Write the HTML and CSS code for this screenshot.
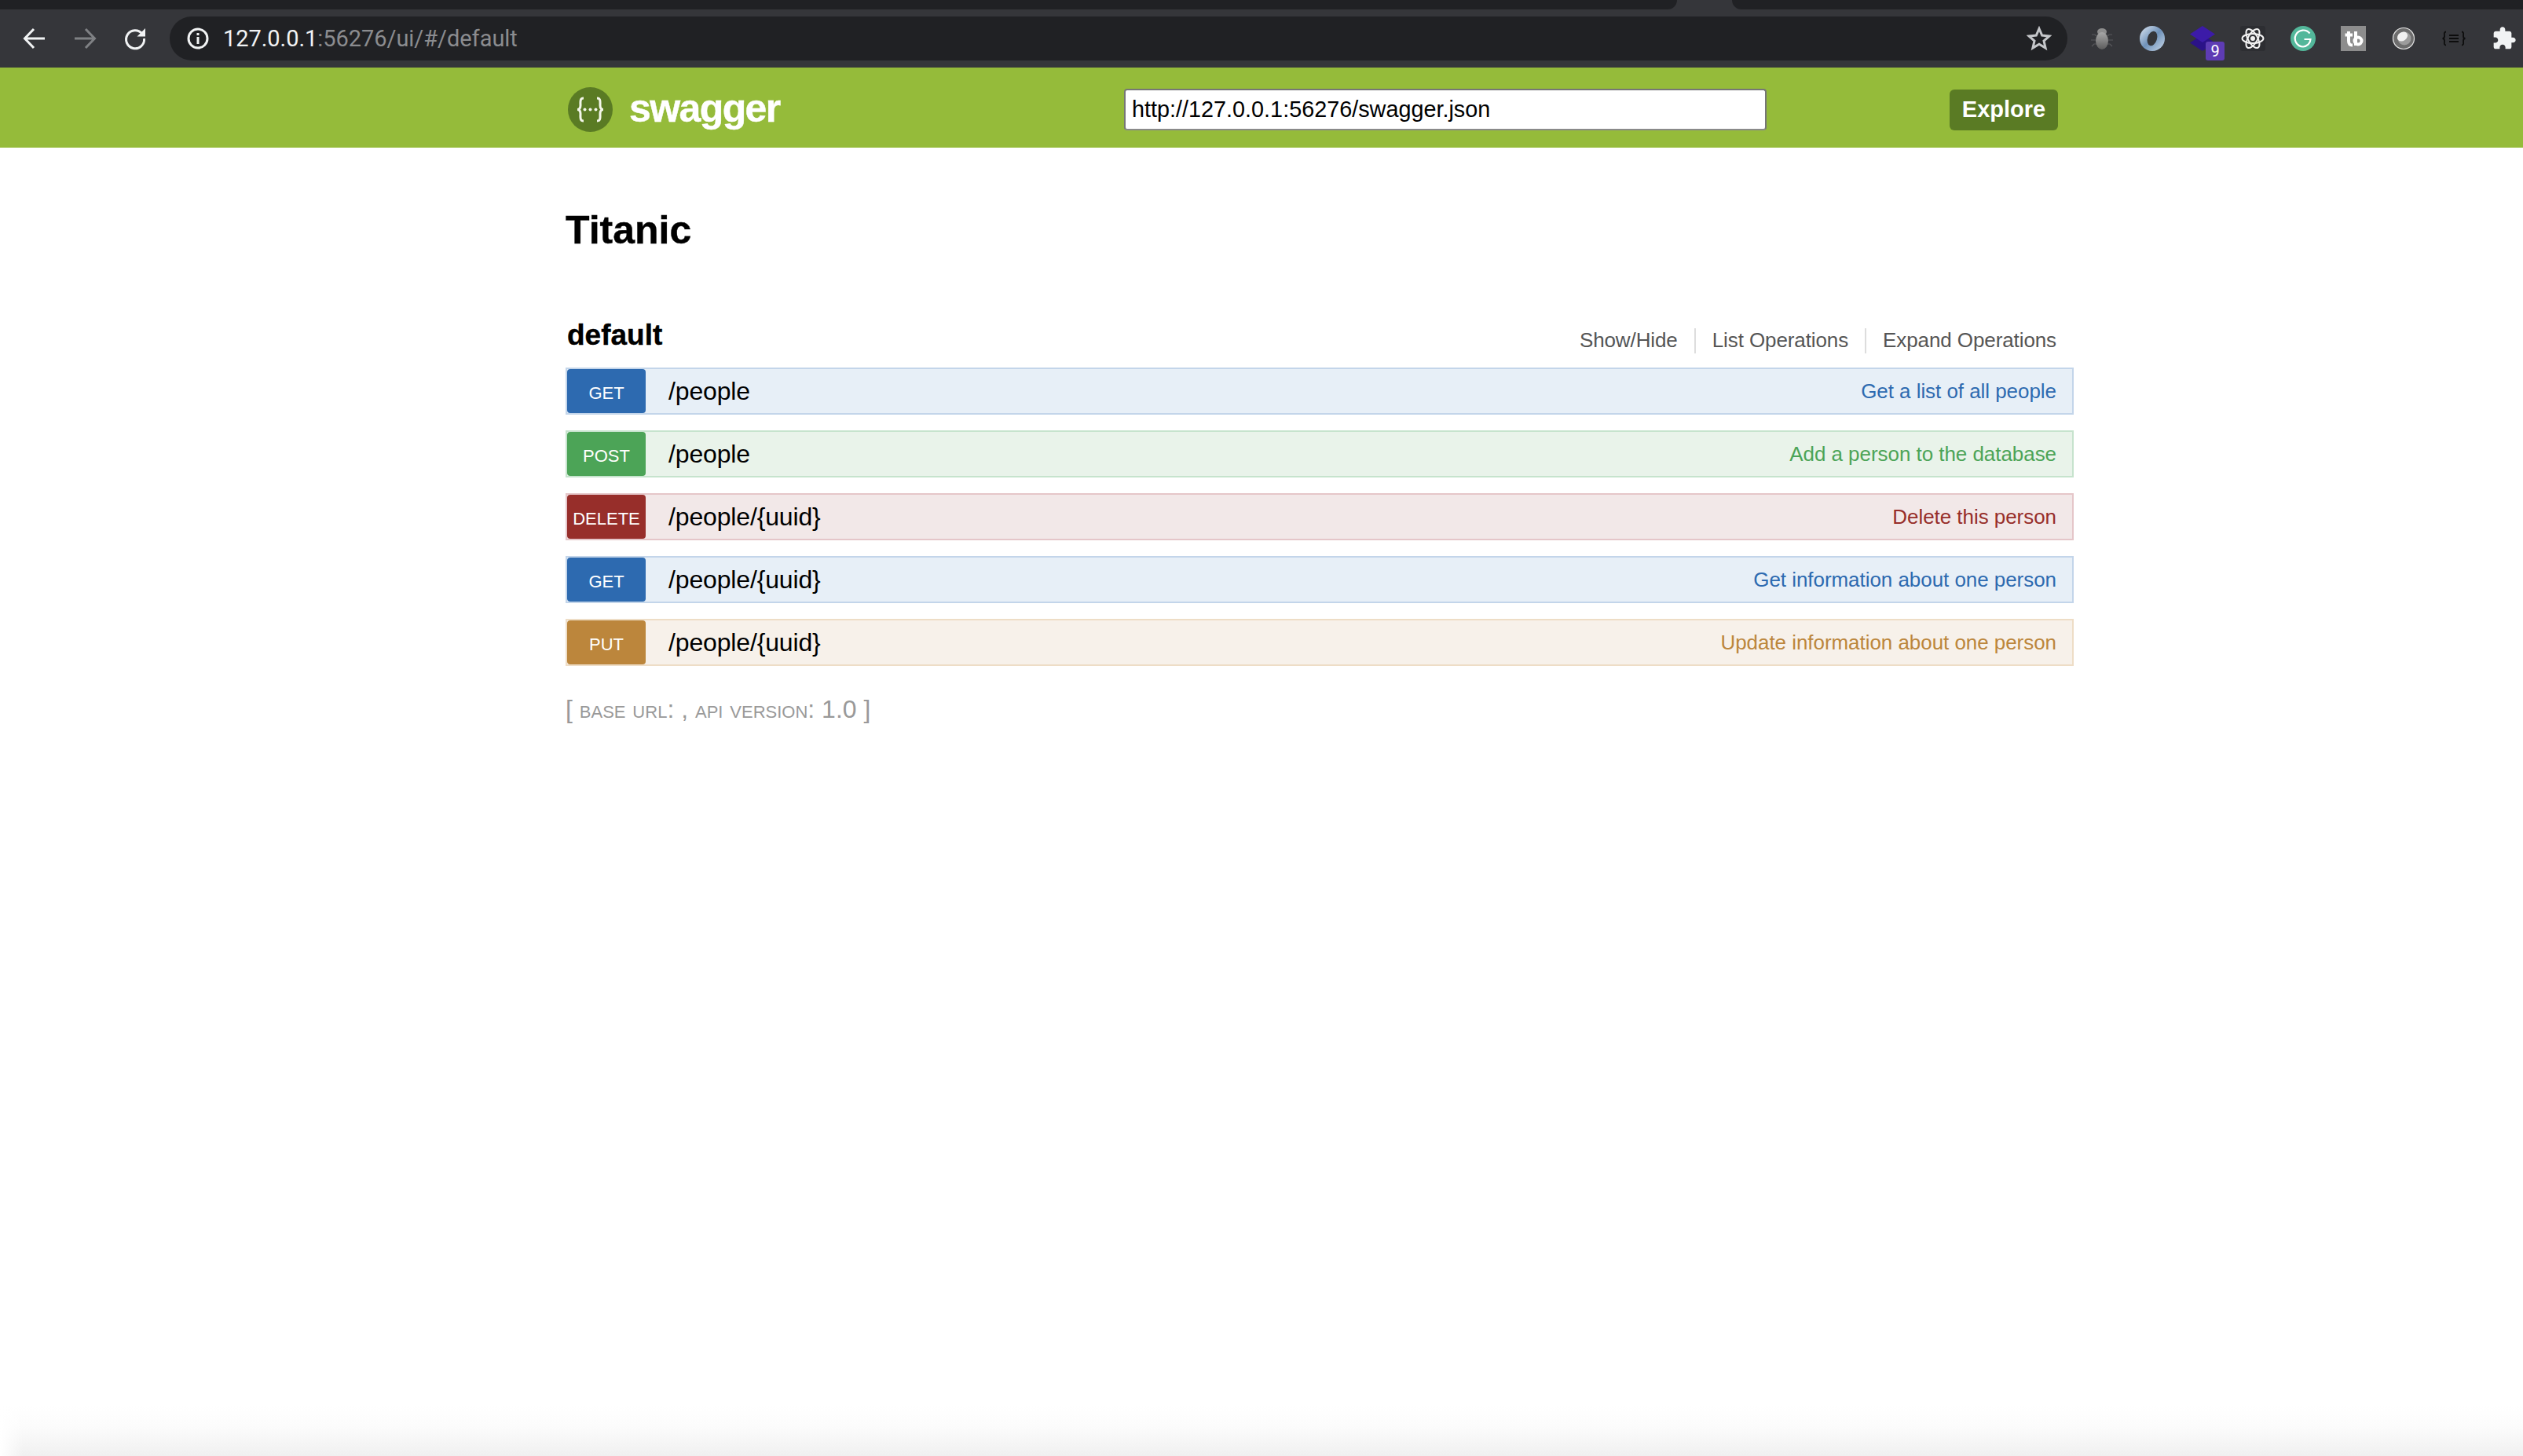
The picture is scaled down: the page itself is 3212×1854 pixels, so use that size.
FILE: index.html
```html
<!DOCTYPE html>
<html lang="en">
<head>
  <meta charset="UTF-8">
  <title>Swagger UI</title>
  <link rel="stylesheet" href="styles.css">
</head>
<body>

<!-- BROWSER CHROME -->
<div class="tabstrip">
  <div class="tabstrip-left"></div>
  <div class="tabstrip-gap"></div>
  <div class="tabstrip-right"></div>
</div>
<div class="toolbar">
  <svg class="tool" viewBox="0 0 32 32"><path class="line-light" d="M29 16H4M15 4 3.500 16 15 28"/></svg>
  <svg class="tool" viewBox="0 0 32 32"><path class="line-dim" d="M3 16h25M17 4l11.500 12L17 28"/></svg>
  <svg class="tool" viewBox="0 0 32 32"><path class="line-light" d="M25 10A11.500 11.500 0 1 0 27.500 16"/><path class="fill-light" d="M29 3v10.500H18.500z"/></svg>
  <div class="omnibox">
    <svg class="omni-info" viewBox="0 0 28 28"><circle class="line-info" cx="14" cy="14" r="12"/><path class="fill-light" d="M12.500 12h3v9h-3zM12.500 7h3v3h-3z"/></svg>
    <div class="omni-url">127.0.0.1<span class="omni-dim">:56276/ui/#/default</span></div>
    <svg class="omni-star" viewBox="0 0 32 32"><path class="line-star" d="M16 3.500l3.700 8.600 9.300.800-7 6.100 2.100 9.100-8.100-4.800-8.100 4.800 2.100-9.100-7-6.100 9.300-.800z"/></svg>
  </div>
  <div class="extensions">
    <svg class="ext" viewBox="0 0 32 32">
      <defs><linearGradient id="bugBody" x1="0" y1="0" x2="0" y2="1"><stop offset="0" stop-color="#a8a8a8"/><stop offset="1" stop-color="#5c5c5c"/></linearGradient></defs>
      <path class="bug-legs" d="M3 11h4l2 2M29 11h-4l-2 2M2 18h6M30 18h-6M3 26l3-3h3M29 26l-3-3h-3"/>
      <ellipse cx="16" cy="7.500" rx="6" ry="4.500" fill="#8e8e8e"/>
      <ellipse cx="16" cy="19" rx="8" ry="11" fill="url(#bugBody)"/>
    </svg>
    <svg class="ext" viewBox="0 0 32 32">
      <defs><linearGradient id="ringFill" x1="0" y1="0" x2="1" y2="1"><stop offset="0" stop-color="#dfe8f2"/><stop offset=".5" stop-color="#6f92ba"/><stop offset="1" stop-color="#c9d8e8"/></linearGradient></defs>
      <circle cx="16" cy="16" r="16" fill="url(#ringFill)"/>
      <ellipse cx="16" cy="16" rx="6" ry="9.500" transform="rotate(18 16 16)" fill="#35363a"/>
    </svg>
    <div class="ext-badged">
      <svg class="ext" viewBox="0 0 32 32">
        <path fill="#2b1288" d="M16 11 32 21.500 16 32 0 21.500z"/>
        <path fill="#3c1ba8" d="M16 0 32 10.500 16 21 0 10.500z"/>
      </svg>
      <span class="ext-count">9</span>
    </div>
    <svg class="ext ext-tile" viewBox="0 0 32 32">
      <g class="line-atom"><ellipse cx="16" cy="16" rx="13.500" ry="6"/><ellipse cx="16" cy="16" rx="13.500" ry="6" transform="rotate(60 16 16)"/><ellipse cx="16" cy="16" rx="13.500" ry="6" transform="rotate(120 16 16)"/></g>
      <circle cx="16" cy="16" r="3" fill="#f2f2f2"/>
    </svg>
    <svg class="ext" viewBox="0 0 32 32"><circle cx="16" cy="16" r="16" fill="#53b79a"/><path class="line-g" d="M24.500 9.500A10.500 10.500 0 1 0 16 26.500 10 10 0 0 0 25.500 17H17.500"/></svg>
    <svg class="ext" viewBox="0 0 32 32"><rect width="32" height="32" fill="#8d8d8d"/><path class="line-tb" d="M5.500 11.500H15M10 7v12c0 4 1.500 5.500 5 5.500M19 7v18"/><circle class="line-tb" cx="22" cy="19" r="4.500"/></svg>
    <svg class="ext" viewBox="0 0 32 32">
      <circle cx="16" cy="16" r="13.500" fill="#6d6d6d" stroke="#e4e4e4" stroke-width="1.200"/>
      <circle cx="17" cy="16" r="8.500" fill="#9c9c9c"/>
      <ellipse cx="14.500" cy="13.500" rx="7" ry="5.500" transform="rotate(-35 14.500 13.500)" fill="#f0f0f0"/>
    </svg>
    <svg class="ext" viewBox="0 0 32 32"><path class="line-json" d="M6 7.500c-3 0-2 3-2 5.500s-1 3-2.500 3c1.500 0 2.500.5 2.500 3s-1 5.500 2 5.500M26 7.500c3 0 2 3 2 5.500s1 3 2.500 3c-1.500 0-2.500.5-2.500 3s1 5.500-2 5.500M10 12h12M10 16h12M10 20h12"/></svg>
    <svg class="ext" viewBox="0 0 24 24"><path fill="#f1f3f4" d="M20.500 11H19V7c0-1.100-.9-2-2-2h-4V3.500C13 2.120 11.880 1 10.500 1S8 2.120 8 3.500V5H4c-1.100 0-1.990.9-1.990 2v3.800H3.500c1.490 0 2.700 1.210 2.700 2.700s-1.210 2.700-2.700 2.700H2V20c0 1.100.9 2 2 2h3.800v-1.500c0-1.490 1.210-2.700 2.700-2.700 1.490 0 2.700 1.210 2.700 2.700V22H17c1.100 0 2-.9 2-2v-4h1.500c1.380 0 2.500-1.120 2.500-2.500S21.880 11 20.500 11z"/></svg>
  </div>
</div>

<!-- SWAGGER HEADER -->
<header class="swagger-header">
  <div class="logo">
    <svg class="logo-mark" viewBox="0 0 57 57">
      <circle cx="28.500" cy="28.500" r="28.500" fill="#5a7b24"/>
      <path class="line-brace" d="M20 14c-5 0-4 5-4 9s-2 5.500-4 5.500c2 0 4 1.500 4 5.500s-1 9 4 9M37 14c5 0 4 5 4 9s2 5.500 4 5.500c-2 0-4 1.500-4 5.500s1 9-4 9"/>
      <circle cx="21.500" cy="28.500" r="2" fill="#f3f6ea"/><circle cx="28.500" cy="28.500" r="2" fill="#f3f6ea"/><circle cx="35.500" cy="28.500" r="2" fill="#f3f6ea"/>
    </svg>
    <span class="logo-text">swagger</span>
  </div>
  <input class="spec-url" type="text" value="http://127.0.0.1:56276/swagger.json">
  <button class="explore">Explore</button>
</header>

<!-- API DOCS -->
<main class="docs">
  <h1 class="api-title">Titanic</h1>

  <div class="resource-head">
    <h2>default</h2>
    <ul class="resource-links">
      <li>Show/Hide</li>
      <li>List Operations</li>
      <li>Expand Operations</li>
    </ul>
  </div>

  <div class="operations">
    <div class="op op-get">
      <span class="op-method">GET</span>
      <span class="op-path">/people</span>
      <span class="op-summary">Get a list of all people</span>
    </div>
    <div class="op op-post">
      <span class="op-method">POST</span>
      <span class="op-path">/people</span>
      <span class="op-summary">Add a person to the database</span>
    </div>
    <div class="op op-delete">
      <span class="op-method">DELETE</span>
      <span class="op-path">/people/{uuid}</span>
      <span class="op-summary">Delete this person</span>
    </div>
    <div class="op op-get">
      <span class="op-method">GET</span>
      <span class="op-path">/people/{uuid}</span>
      <span class="op-summary">Get information about one person</span>
    </div>
    <div class="op op-put">
      <span class="op-method">PUT</span>
      <span class="op-path">/people/{uuid}</span>
      <span class="op-summary">Update information about one person</span>
    </div>
  </div>

  <p class="api-footer">[ <span class="caps">base url</span>: , <span class="caps">api version</span>: 1.0 ]</p>
</main>

<div class="window-shade"></div>

</body>
</html>
```

FILE: styles.css
```css
html, body { height: 100%; }

body {
  margin: 0;
  display: flex;
  flex-direction: column;
  background: #fff;
  color: #000;
  font-family: "Liberation Sans", Arial, sans-serif;
  overflow: hidden;
}

/* browser chrome */
.tabstrip {
  display: flex;
  height: 12px;
  background: #35363a;
}

.tabstrip-left {
  width: 2135px;
  background: #202124;
  border-bottom-right-radius: 12px;
}

.tabstrip-gap { width: 70px; }

.tabstrip-right {
  flex: 1;
  background: #202124;
  border-bottom-left-radius: 12px;
}

.toolbar {
  display: flex;
  align-items: center;
  gap: 32px;
  height: 74px;
  padding: 0 8px 0 28px;
  background: #35363a;
}

.tool, .ext {
  width: 32px;
  height: 32px;
  flex: none;
  display: block;
}

.line-light, .line-dim {
  fill: none;
  stroke: #f1f3f4;
  stroke-width: 3;
}

.line-dim { stroke: #7f8184; }

.fill-light { fill: #f1f3f4; }

.omnibox {
  flex: 1;
  display: flex;
  align-items: center;
  height: 56px;
  margin: 0 -4px;
  padding: 0 20px 0 22px;
  background: #202124;
  border-radius: 28px;
}

.omni-info {
  width: 28px;
  height: 28px;
  margin-right: 18px;
}

.line-info {
  fill: none;
  stroke: #f1f3f4;
  stroke-width: 3;
}

.omni-url {
  flex: 1;
  font-family: Roboto, sans-serif;
  font-size: 29px;
  letter-spacing: -0.050px;
  color: #f1f3f4;
}

.omni-dim { color: #8b8c8f; }

.omni-star {
  width: 32px;
  height: 32px;
}

.line-star {
  fill: none;
  stroke: #c4c6c9;
  stroke-width: 3;
}

.extensions {
  display: flex;
  gap: 32px;
}

.ext-badged { position: relative; }

.ext-count {
  position: absolute;
  left: 20px;
  top: 20px;
  width: 24px;
  height: 24px;
  background: #5e3cb4;
  border-radius: 3px;
  color: #fff;
  font-family: Roboto, sans-serif;
  font-size: 20px;
  line-height: 24px;
  text-align: center;
}

.ext-tile {
  background: #2d2e32;
  border-radius: 3px;
}

.bug-legs {
  fill: none;
  stroke: #58595c;
  stroke-width: 1.2;
}

.line-atom {
  fill: none;
  stroke: #f2f2f2;
  stroke-width: 2;
}

.line-g {
  fill: none;
  stroke: #fff;
  stroke-width: 2.2;
}

.line-tb {
  fill: none;
  stroke: #fff;
  stroke-width: 4;
}

.line-json {
  fill: none;
  stroke: #0d0d0d;
  stroke-width: 1.8;
}

/* swagger header */
.swagger-header {
  display: flex;
  align-items: center;
  box-sizing: border-box;
  height: 102px;
  padding: 5px 592px 0 723px;
  background: #95bb3a;
}

.logo {
  display: flex;
  align-items: center;
  gap: 21px;
  width: 708px;
}

.logo-mark {
  width: 57px;
  height: 57px;
}

.line-brace {
  fill: none;
  stroke: #f3f6ea;
  stroke-width: 3;
}

.logo-text {
  color: #fff;
  font-size: 50px;
  font-weight: bold;
  letter-spacing: -1.600px;
  -webkit-text-stroke: 0.5px #fff;
  position: relative;
  top: -2px;
}

.spec-url {
  box-sizing: border-box;
  width: 818px;
  height: 53px;
  padding: 0 8px;
  border: 2px solid #767676;
  border-bottom-color: #8a8a8a;
  border-radius: 4px;
  background: #fff;
  color: #000;
  font-family: "Liberation Sans", Arial, sans-serif;
  font-size: 28.800px;
}

.explore {
  width: 138px;
  height: 52px;
  margin-left: auto;
  padding: 0;
  border: none;
  border-radius: 6px;
  background: #5a7b24;
  color: #fff;
  font-family: "Liberation Sans", Arial, sans-serif;
  font-size: 29px;
  font-weight: bold;
}

/* api docs */
.docs {
  flex: 1;
  width: 1920px;
  margin-left: 720px;
}

.api-title {
  margin: 76px 0 0;
  font-size: 50px;
  line-height: 58px;
  font-weight: bold;
  -webkit-text-stroke: 0.4px #000;
}

.resource-head {
  display: flex;
  align-items: flex-end;
  justify-content: space-between;
  margin-top: 82px;
  height: 46px;
  padding: 0 22px 0 2px;
}

.resource-head h2 {
  margin: 0;
  font-size: 37px;
  line-height: 46px;
  font-weight: bold;
  -webkit-text-stroke: 0.4px #000;
}

.resource-links {
  display: flex;
  margin: 0;
  padding: 0;
  list-style: none;
  color: #555;
  font-size: 26px;
  line-height: 30px;
  letter-spacing: -0.100px;
}

.resource-links li {
  padding: 0 21px 2px;
  border-right: 2px solid #ddd;
}

.resource-links li:last-child {
  padding-right: 0;
  border-right: none;
}

.operations {
  display: flex;
  flex-direction: column;
  gap: 20px;
  margin-top: 18px;
}

.op {
  display: flex;
  align-items: center;
  box-sizing: border-box;
  height: 60px;
  padding-right: 20px;
  border: 2px solid;
  font-size: 32px;
}

.op-method {
  width: 100px;
  height: 56px;
  border-radius: 4px;
  color: #fff;
  font-size: 22px;
  line-height: 62px;
  text-align: center;
}

.op-path {
  flex: 1;
  margin-left: 29px;
  letter-spacing: -0.150px;
}

.op-summary {
  font-size: 26px;
  letter-spacing: -0.050px;
}

.op-get { background: #e7eff7; border-color: #c3d5ea; }
.op-get .op-method { background: #2d6ab0; }
.op-get .op-summary { color: #2d6ab0; }

.op-post { background: #e9f3ea; border-color: #c6e3cd; }
.op-post .op-method { background: #4ca457; }
.op-post .op-summary { color: #4ca457; }

.op-delete { background: #f2e8e8; border-color: #e5c6c9; }
.op-delete .op-method { background: #972e2a; }
.op-delete .op-summary { color: #972e2a; }

.op-put { background: #f7f1ea; border-color: #eeddc6; }
.op-put .op-method { background: #bc863c; }
.op-put .op-summary { color: #bc863c; }

.api-footer {
  margin: 36px 0 0;
  color: #999;
  font-size: 32px;
  line-height: 38px;
}

.caps { font-variant: small-caps; }

.window-shade {
  flex: none;
  height: 64px;
  background:
    linear-gradient(to right, #fff, rgba(255,255,255,0) 30px),
    linear-gradient(to bottom, #fff, #fcfcfc 40%, #f0f0f0);
}
```
